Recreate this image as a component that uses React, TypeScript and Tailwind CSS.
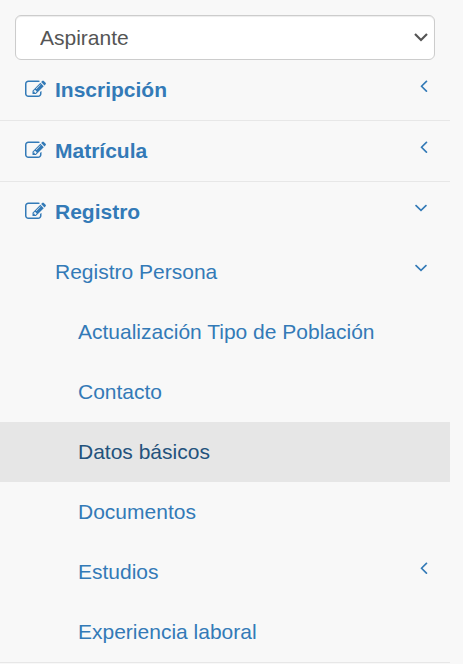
import React from "react";

function EditIcon() {
  return (
    <svg viewBox="0 0 1792 1792" fill="currentColor" className="mt-1 size-[21px] shrink-0" aria-hidden="true">
      <path d="M888 1184l116-116-152-152-116 116v56h96v96h56zm440-720q-16-16-33 1l-350 350q-17 17-1 33t33-1l350-350q17-17 1-33zm80 594v190q0 119-84.5 203.5t-203.5 84.5h-832q-119 0-203.5-84.5t-84.5-203.5v-832q0-119 84.5-203.5t203.5-84.5h832q63 0 117 25 15 7 18 23 3 17-9 29l-49 49q-14 14-32 8-23-6-45-6h-832q-66 0-113 47t-47 113v832q0 66 47 113t113 47h832q66 0 113-47t47-113v-126q0-13 9-22l64-64q15-15 35-7t20 29zm-96-738l288 288-672 672h-288v-288zm444 132l-92 92-288-288 92-92q28-28 68-28t68 28l152 152q28 28 28 68t-28 68z" />
    </svg>
  );
}

function AngleLeft() {
  return (
    <svg viewBox="576 0 683 1792" fill="currentColor" className="h-[21px] w-2 shrink-0" aria-hidden="true">
      <path d="M1203 544q0 13-10 23l-393 393 393 393q10 10 10 23t-10 23l-50 50q-10 10-23 10t-23-10l-466-466q-10-10-10-23t10-23l466-466q10-10 23-10t23 10l50 50q10 10 10 23z" />
    </svg>
  );
}

function AngleDown() {
  return (
    <svg viewBox="299 0 1195 1792" fill="currentColor" className="h-[21px] w-3.5 shrink-0" aria-hidden="true">
      <path d="M1395 736q0 13-10 23l-466 466q-10 10-23 10t-23-10l-466-466q-10-10-10-23t10-23l50-50q10-10 23-10t23 10l393 393 393-393q10-10 23-10t23 10l50 50q10 10 10 23z" />
    </svg>
  );
}

type Arrow = "left" | "down";

function RowArrow({ arrow }: { arrow?: Arrow }) {
  if (!arrow) return null;
  return arrow === "left" ? <AngleLeft /> : <AngleDown />;
}

function SectionLink({ label, arrow }: { label: string; arrow: Arrow }) {
  return (
    <a href="#" className="flex items-start justify-between py-[15px] pr-[22px] pl-[25px] font-bold hover:bg-[#eee]">
      <span className="flex items-start gap-[9px]">
        <EditIcon />
        {label}
      </span>
      <RowArrow arrow={arrow} />
    </a>
  );
}

const personItems: { label: string; arrow?: Arrow; active?: boolean }[] = [
  { label: "Actualización Tipo de Población" },
  { label: "Contacto" },
  { label: "Datos básicos", active: true },
  { label: "Documentos" },
  { label: "Estudios", arrow: "left" },
  { label: "Experiencia laboral" },
];

export default function App() {
  return (
    <div className="min-h-screen bg-[#f8f8f8] pr-[13px] font-['Liberation_Sans',Arial,sans-serif] text-[21px] leading-[30px] text-[#337ab7]">
      <div className="px-[15px] pt-[15px]">
        <div className="relative">
          <select
            aria-label="Rol"
            className="block h-[45px] w-full appearance-none rounded-md border border-[#ccc] bg-white pr-10 pl-6 text-[#555] shadow-[inset_0_1px_1px_rgba(0,0,0,0.075)]"
          >
            <option>Aspirante</option>
          </select>
          <svg
            viewBox="0 0 14 10"
            fill="none"
            stroke="#555"
            strokeWidth="2.2"
            className="pointer-events-none absolute top-[17px] right-[7px] h-2.5 w-3.5"
            aria-hidden="true"
          >
            <path d="M1 2l6 6 6-6" />
          </svg>
        </div>
      </div>
      <nav aria-label="Menú">
        <ul>
          <li className="border-b border-[#e7e7e7]">
            <SectionLink label="Inscripción" arrow="left" />
          </li>
          <li className="border-b border-[#e7e7e7]">
            <SectionLink label="Matrícula" arrow="left" />
          </li>
          <li className="border-b border-[#e7e7e7]">
            <SectionLink label="Registro" arrow="down" />
            <a href="#" className="flex items-start justify-between py-[15px] pr-[22px] pl-[55px] hover:bg-[#eee]">
              Registro Persona
              <AngleDown />
            </a>
            <ul>
              {personItems.map((item) => (
                <li key={item.label}>
                  <a
                    href="#"
                    aria-current={item.active ? "page" : undefined}
                    className={
                      item.active
                        ? "flex items-start justify-between bg-[#e6e6e6] py-[15px] pr-[22px] pl-[78px] text-[#23527c]"
                        : "flex items-start justify-between py-[15px] pr-[22px] pl-[78px] hover:bg-[#eee]"
                    }
                  >
                    {item.label}
                    <RowArrow arrow={item.arrow} />
                  </a>
                </li>
              ))}
            </ul>
          </li>
        </ul>
      </nav>
    </div>
  );
}
